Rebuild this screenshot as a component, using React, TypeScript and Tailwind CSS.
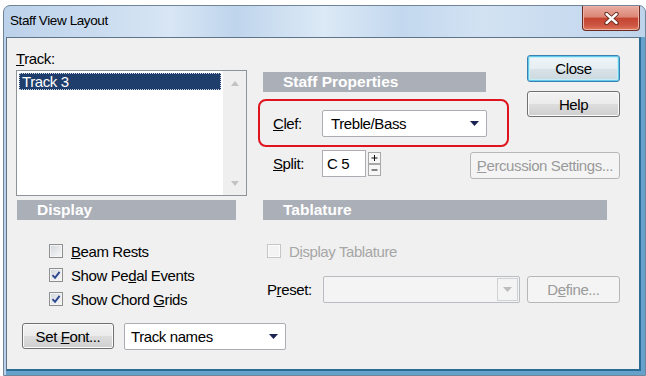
import type { ReactNode } from 'react';

function Arrow({ color = '#1b2352' }: { color?: string }) {
  return (
    <svg width="9" height="5" viewBox="0 0 9 5">
      <path d="M0 0h9L4.5 5z" fill={color} />
    </svg>
  );
}

function CheckBox({ checked, disabled }: { checked?: boolean; disabled?: boolean }) {
  return (
    <div
      className={
        disabled
          ? 'w-[14px] h-[14px] border border-[#c6c6c6] bg-[#f3f3f3] shadow-[inset_0_0_0_1px_#fbfbfb]'
          : 'w-[14px] h-[14px] border border-[#8e8f8f] bg-[linear-gradient(135deg,#cfd3d9_0%,#e6e8eb_50%,#f8f8f8_100%)] shadow-[inset_0_0_0_1px_#f4f4f4] flex items-center justify-center'
      }
    >
      {checked && (
        <svg width="10" height="10" viewBox="0 0 10 10">
          <path d="M1.5 5.2 L4 7.8 L8.6 1.8" fill="none" stroke="#2a4790" strokeWidth="1.9" />
        </svg>
      )}
    </div>
  );
}

function Button({
  children,
  className = '',
  disabled,
  primary,
}: {
  children: ReactNode;
  className?: string;
  disabled?: boolean;
  primary?: boolean;
}) {
  let look =
    'border-[#707070] bg-[linear-gradient(#f2f2f2_0%,#ebebeb_50%,#dddddd_51%,#cfcfcf_100%)] shadow-[inset_0_0_0_1px_#fbfbfb] text-black';
  if (primary)
    look =
      'border-[#3c7fb1] bg-[linear-gradient(#f0f6f9_0%,#e6eef2_50%,#d8e3e8_51%,#cbd8de_100%)] shadow-[inset_0_0_0_1px_#62cbe9,inset_0_0_0_2px_#c6eef9] text-black';
  if (disabled) look = 'border-[#b5b8ba] bg-[#f4f4f4] text-[#9a9a9a]';
  return (
    <div className={`flex items-center justify-center rounded-[3px] border whitespace-nowrap ${look} ${className}`}>
      {children}
    </div>
  );
}

function Header({ children, className = '' }: { children: ReactNode; className?: string }) {
  return (
    <div
      className={`h-[20px] bg-[#abafb7] pl-[20px] flex items-center text-white font-bold text-[15.5px] leading-[18px] tracking-normal ${className}`}
    >
      {children}
    </div>
  );
}

function Combo({ text, className = '' }: { text: string; className?: string }) {
  return (
    <div
      className={`h-[27px] bg-white border border-[#abadb3] rounded-[2px] flex items-center justify-between pl-[6px] pr-[7px] ${className}`}
    >
      <span>{text}</span>
      <Arrow />
    </div>
  );
}

export default function App() {
  return (
    <div className="w-[646px] h-[376px] bg-white overflow-hidden font-['Liberation_Sans',Arial,sans-serif] text-[15px] tracking-[-0.4px] leading-[17px] text-black">
      <div className="ml-[3px] mt-[5px] w-[643px] h-[371px] rounded-t-[7px] border border-[#71859a] bg-[linear-gradient(90deg,#bcd2ea_0%,#c9dbef_14%,#d8e6f5_26%,#bfd5ec_36%,#dce9f6_50%,#c3d8ee_62%,#d2e2f3_75%,#bfd4eb_100%)] flex flex-col">
        {/* title bar */}
        <div className="h-[31px] flex items-start justify-between">
          <div className="pl-[6px] pt-[6px] text-[13.5px] tracking-[-0.4px] leading-[17px]">Staff View Layout</div>
          <div className="mr-[5px] w-[58px] h-[25px] rounded-b-[4px] border border-t-0 border-[#6a2a22] bg-[linear-gradient(#e9ada1_0%,#dc8676_45%,#c54532_52%,#cc5542_80%,#e07a5c_100%)] shadow-[inset_0_0_0_1px_#eeb3a8] flex items-center justify-center">
            <svg width="15" height="13" viewBox="0 0 15 13">
              <path d="M2.5 2 L12.5 11 M12.5 2 L2.5 11" stroke="#5b2019" strokeWidth="4.2" strokeLinecap="round" />
              <path d="M2.5 2 L12.5 11 M12.5 2 L2.5 11" stroke="#ffffff" strokeWidth="2.4" strokeLinecap="round" />
            </svg>
          </div>
        </div>

        {/* client area */}
        <div className="ml-[2px] w-[635px] h-[334px] bg-[#f0f0f0] border-l border-t border-[#5d7489] border-r-2 border-b-2 border-r-[#2b6c95] border-b-[#2b6c95] shadow-[4px_0_0_#64a2cc,0_4px_0_#64a2cc,4px_4px_0_#64a2cc]">
          <div className="pl-[9px] flex flex-col">
            {/* top section */}
            <div className="flex h-[158px]">
              <div className="w-[231px] flex flex-col">
                <div className="pt-[12px] h-[28px]">
                  <u>T</u>rack:
                </div>
                <div className="mt-[4px] h-[126px] border border-[#8e9299] bg-white flex">
                  <div className="flex-1 p-[2px]">
                    <div className="h-[17px] bg-[#1f3e6b] outline outline-1 outline-dotted outline-[#c9d3df] -outline-offset-1 text-white pl-[3px] flex items-center">
                      Track 3
                    </div>
                  </div>
                  <div className="w-[23px] bg-[#efefef] flex flex-col justify-between">
                    <div className="h-[24px] flex items-center justify-center">
                      <svg width="8" height="5" viewBox="0 0 8 5">
                        <path d="M0 5h8L4 0z" fill="#c3c3c3" />
                      </svg>
                    </div>
                    <div className="h-[24px] flex items-center justify-center">
                      <svg width="8" height="5" viewBox="0 0 8 5">
                        <path d="M0 0h8L4 5z" fill="#c3c3c3" />
                      </svg>
                    </div>
                  </div>
                </div>
              </div>

              <div className="ml-[11px] w-[362px] flex flex-col">
                <div className="flex justify-between">
                  <div className="w-[251px] flex flex-col">
                    <Header className="mt-[34px] ml-[5px] w-[223px]">Staff Properties</Header>
                    <div className="mt-[7px] h-[48px] border-2 border-[#e0141e] rounded-[8px] flex items-center pl-[13px]">
                      <div className="w-[49px]">
                        <u>C</u>lef:
                      </div>
                      <Combo text="Treble/Bass" className="w-[165px] pl-[8px]" />
                    </div>
                  </div>
                  <div className="w-[93px] flex flex-col">
                    <Button primary className="mt-[17px] h-[27px]">
                      Close
                    </Button>
                    <Button className="mt-[9px] h-[26px]">Help</Button>
                  </div>
                </div>

                <div className="mt-[3px] flex items-start">
                  <div className="w-[64px] pl-[15px] h-[27px] flex items-center">
                    <span>
                      <u>S</u>plit:
                    </span>
                  </div>
                  <div className="w-[44px] h-[27px] bg-white border border-[#abadb3] flex items-center pl-[4px]">C 5</div>
                  <div className="ml-[2px] mt-[2px]">
                    <svg width="13" height="24" viewBox="0 0 13 24">
                      <rect x="0.5" y="0.5" width="12" height="11" fill="#f6f6f6" stroke="#a8a8a8" />
                      <rect x="0.5" y="12.5" width="12" height="11" fill="#f6f6f6" stroke="#a8a8a8" />
                      <path d="M3.5 6h6M6.5 3v6" stroke="#111" strokeWidth="1" />
                      <path d="M3.5 18h6" stroke="#111" strokeWidth="1" />
                    </svg>
                  </div>
                  <Button disabled className="ml-auto mt-[2px] w-[150px] h-[27px]">
                    <span>
                      <u>P</u>ercussion Settings...
                    </span>
                  </Button>
                </div>
              </div>
            </div>

            {/* section headers */}
            <div className="mt-[4px] flex">
              <Header className="ml-[1px] w-[219px]">Display</Header>
              <Header className="ml-[27px] w-[344px]">Tablature</Header>
            </div>

            {/* options */}
            <div className="mt-[19px] flex">
              <div className="w-[251px] pl-[33px] flex flex-col">
                <div className="h-[24px] flex items-center gap-[8px]">
                  <CheckBox />
                  <span>
                    <u>B</u>eam Rests
                  </span>
                </div>
                <div className="h-[24px] flex items-center gap-[8px]">
                  <CheckBox checked />
                  <span>
                    Show Pe<u>d</u>al Events
                  </span>
                </div>
                <div className="h-[24px] flex items-center gap-[8px]">
                  <CheckBox checked />
                  <span>
                    Show Chord <u>G</u>rids
                  </span>
                </div>
              </div>
              <div className="flex flex-col">
                <div className="h-[24px] flex items-center gap-[8px] text-[#a6a6a6]">
                  <CheckBox disabled />
                  <span>
                    D<u>i</u>splay Tablature
                  </span>
                </div>
                <div className="mt-[13px] h-[27px] flex items-center">
                  <div className="w-[56px]">
                    P<u>r</u>eset:
                  </div>
                  <div className="w-[197px] h-[27px] border border-[#b9bcc0] bg-[#f4f4f4] rounded-[2px] flex justify-end p-[1px] pr-[1px]">
                    <div className="w-[21px] h-full border border-[#cfd1d3] bg-[#f4f4f4] flex items-center justify-center">
                      <Arrow color="#bdbdbd" />
                    </div>
                  </div>
                  <Button disabled className="ml-[7px] w-[93px] h-[27px]">
                    <span>
                      D<u>e</u>fine...
                    </span>
                  </Button>
                </div>
              </div>
            </div>

            {/* font row */}
            <div className="mt-[12px] flex items-start">
              <Button className="ml-[6px] w-[92px] h-[26px]">
                <span>
                  Set <u>F</u>ont...
                </span>
              </Button>
              <Combo text="Track names" className="ml-[10px] w-[162px]" />
            </div>
          </div>
        </div>
      </div>
    </div>
  );
}
